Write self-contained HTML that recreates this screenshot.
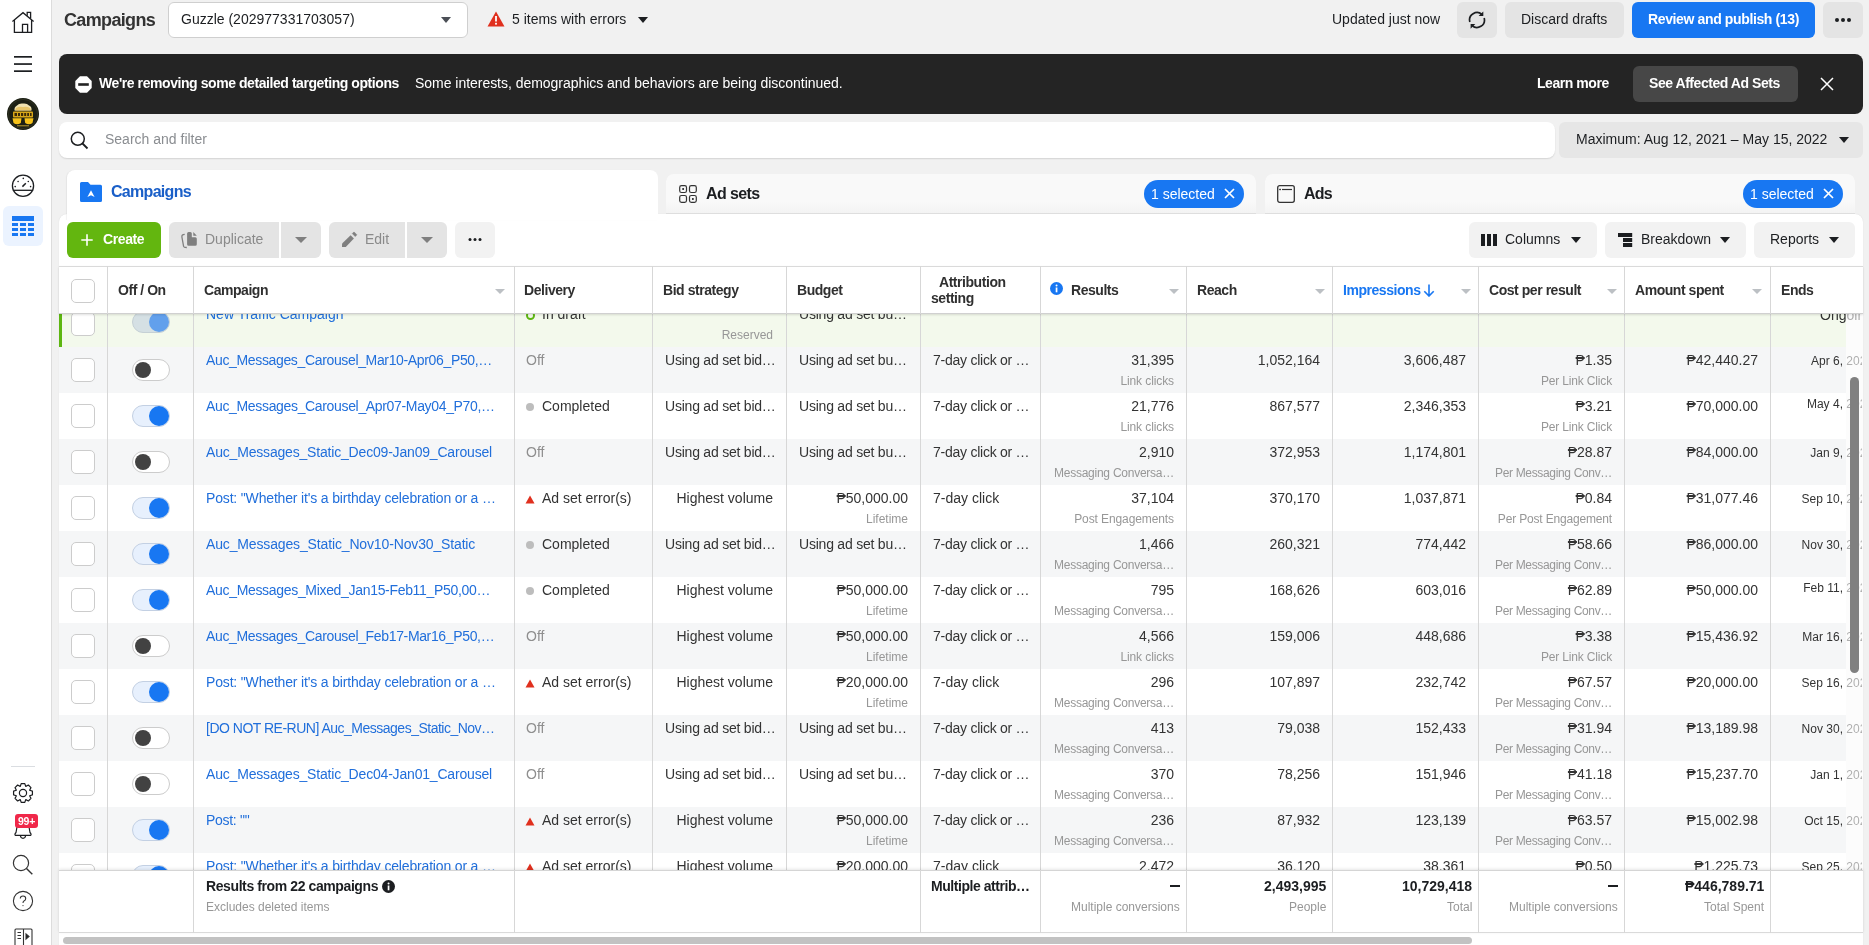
<!DOCTYPE html>
<html><head><meta charset="utf-8"><title>Campaigns - Ads Manager</title>
<style>
*{box-sizing:border-box}
html,body{margin:0;padding:0}
body>*{will-change:transform}
body{width:1869px;height:945px;overflow:hidden;position:relative;background:#f1f1f1;font-family:"Liberation Sans",sans-serif;font-size:14px;color:#1c1e21}
.abs{position:absolute}
.t{position:absolute;white-space:nowrap;line-height:16px}
.b{font-weight:700;letter-spacing:-0.45px}
.btn{position:absolute;border-radius:6px;background:#e4e4e4}
.ell{overflow:hidden;text-overflow:ellipsis}
.vl{position:absolute;width:1px;background:#d7d7d7}
.cb{position:absolute;width:24px;height:24px;border:1px solid #cccccc;border-radius:5px;background:#fff}
.tg{position:absolute;width:38px;height:22px;border-radius:11px}
.tg.off{background:#fff;border:1px solid #cccccc}
.tg.on{background:#e7f0fd;border:1px solid #c3d0e3}
.knob{position:absolute;width:18px;height:18px;border-radius:50%;top:2px}
.r{text-align:right}
.sub{font-size:12px;color:#979797}
.arr{position:absolute;width:0;height:0;border-left:6px solid transparent;border-right:6px solid transparent;border-top:6px solid #1c1e21}
.sarr{position:absolute;width:0;height:0;border-left:6px solid transparent;border-right:6px solid transparent;border-top:6px solid #bcc0c4}
</style></head><body>

<div class="abs" style="left:0;top:0;width:52px;height:945px;background:#fff;border-right:1px solid #dcdcdc"></div>
<svg class="abs" style="left:12px;top:11px" width="23" height="23" viewBox="0 0 23 23" fill="none" stroke="#1c1e21" stroke-width="1.3">
<path d="M0.4 10.6 L11 1.7 L21.6 10.6"/><path d="M2.4 9 V21.4 H19.6 V9"/><path d="M15.2 4.8 V1.3 H18.6 V7.6"/><path d="M10.5 21.4 V13.3 H15.6 V21.4"/></svg>
<svg class="abs" style="left:14px;top:55px" width="19" height="18" viewBox="0 0 19 18"><rect x="0" y="1" width="18" height="1.7" fill="#1c1e21"/><rect x="0" y="8.2" width="18" height="1.7" fill="#1c1e21"/><rect x="0" y="15.3" width="18" height="1.7" fill="#1c1e21"/></svg>
<svg class="abs" style="left:7px;top:98px" width="32" height="32" viewBox="0 0 32 32">
<circle cx="16" cy="16" r="16" fill="#1b1f14"/>
<circle cx="16" cy="16" r="14.6" fill="none" stroke="#3a3a2a" stroke-width="0.6"/>
<path d="M7.5 12.5 Q7 9 10 7.5 Q12 5 16 5.5 Q20 5 22 7.5 Q25 8.5 24.5 12.5 Z" fill="#f0e2b0"/>
<path d="M9 10 Q12 8 16 9 Q20 8 23 10 L24 12.5 H8 Z" fill="#e8c66a"/>
<rect x="6" y="13.5" width="20" height="6" rx="0.8" fill="#d9a718"/>
<path d="M7.5 15 h2.5 v3 h-2.5 z M11 15 h2 v3 h-2 z M14 15 h2.2 v3 h-2.2 z M17.2 15 h2 v3 h-2 z M20.2 15 h1.8 v3 h-1.8 z M23 15 h1.6 v3 h-1.6 z" fill="#3a2a08"/>
<path d="M5.5 20.3 H14.5 L13.8 25 Q10 27.5 6.5 25 Z" fill="#f6c21a"/>
<path d="M17.5 20.3 H26.5 L25.5 25 Q22 27.5 18.2 25 Z" fill="#f6c21a"/>
<rect x="10" y="27.3" width="12" height="1" fill="#b89a30"/>
</svg>
<svg class="abs" style="left:11px;top:174px" width="24" height="24" viewBox="0 0 24 24" fill="none" stroke="#1c1e21" stroke-width="1.3">
<circle cx="12" cy="11.8" r="10.6"/><path d="M1.8 16.3 H22.2"/><path d="M11.4 12.6 L14.8 9.2" stroke-width="1.5"/>
<g fill="#1c1e21" stroke="none"><circle cx="4.2" cy="12.6" r="0.8"/><circle cx="7.1" cy="7.5" r="0.8"/><circle cx="12.3" cy="4.4" r="0.8"/><circle cx="17.3" cy="7.5" r="0.8"/><circle cx="19.6" cy="12.6" r="0.8"/></g>
</svg>
<div class="abs" style="left:3px;top:206px;width:40px;height:40px;border-radius:6px;background:#ebf3ff"></div>
<svg class="abs" style="left:12px;top:216px" width="22" height="21" viewBox="0 0 22 21" fill="#1877f2">
<rect x="0" y="0" width="22" height="5"/>
<rect x="0" y="7" width="6" height="3"/><rect x="8" y="7" width="6" height="3"/><rect x="16" y="7" width="6" height="3"/>
<rect x="0" y="12" width="6" height="3"/><rect x="8" y="12" width="6" height="3"/><rect x="16" y="12" width="6" height="3"/>
<rect x="0" y="17" width="6" height="3"/><rect x="8" y="17" width="6" height="3"/><rect x="16" y="17" width="6" height="3"/>
</svg>
<div class="abs" style="left:11px;top:766px;width:24px;height:1px;background:#dadde1"></div>
<svg class="abs" style="left:12px;top:782px" width="22" height="22" viewBox="0 0 22 22" fill="none" stroke="#1c1e21" stroke-width="1.2" stroke-linejoin="round">
<path d="M13.70 4.32 L12.83 1.58 L9.17 1.58 L8.30 4.32 L8.19 4.37 L5.63 3.04 L3.04 5.63 L4.37 8.19 L4.32 8.30 L1.58 9.17 L1.58 12.83 L4.32 13.70 L4.37 13.81 L3.04 16.37 L5.63 18.96 L8.19 17.63 L8.30 17.68 L9.17 20.42 L12.83 20.42 L13.70 17.68 L13.81 17.63 L16.37 18.96 L18.96 16.37 L17.63 13.81 L17.68 13.70 L20.42 12.83 L20.42 9.17 L17.68 8.30 L17.63 8.19 L18.96 5.63 L16.37 3.04 L13.81 4.37 Z"/>
<circle cx="11" cy="11" r="3.6"/></svg>
<svg class="abs" style="left:13px;top:818px" width="20" height="22" viewBox="0 0 20 22" fill="none" stroke="#1c1e21" stroke-width="1.2" stroke-linejoin="round">
<path d="M4.5 6 L3 14.5 Q1.3 16.5 2.3 17.3 H17.7 Q18.7 16.5 17 14.5 L15.5 6"/><path d="M7.3 17.5 Q7.8 20.3 10 20.3 Q12.2 20.3 12.7 17.5"/></svg>
<div class="abs" style="left:15px;top:814px;width:23px;height:14px;border-radius:3px;background:#f0284a;color:#fff;font-size:10.5px;font-weight:700;line-height:14px;text-align:center;letter-spacing:-0.2px">99+</div>
<svg class="abs" style="left:12px;top:854px" width="22" height="22" viewBox="0 0 22 22" fill="none" stroke="#333" stroke-width="1.2">
<circle cx="9" cy="9" r="7.6"/><path d="M14.5 14.5 L20.3 20.3" stroke-width="1.4"/></svg>
<svg class="abs" style="left:12px;top:890px" width="22" height="22" viewBox="0 0 22 22" fill="none" stroke="#333" stroke-width="1.1">
<circle cx="11" cy="11" r="9.6"/><path d="M8.3 8.6 Q8.3 6 11 6 Q13.7 6 13.7 8.4 Q13.7 10 12 10.9 Q11 11.5 11 13"/><circle cx="11" cy="15.6" r="0.6" fill="#333" stroke="none"/></svg>
<svg class="abs" style="left:14px;top:928px" width="19" height="18" viewBox="0 0 19 18" fill="none" stroke="#333" stroke-width="1.1">
<path d="M9.5 1 V18 M2 1 H17 Q18 1 18 2 V18 M1 18 V2 Q1 1 2 1"/><path d="M3.5 4.5 H7 M3.5 7.5 H7 M3.5 10.5 H7"/><path d="M12 6 L15 8.5 L12 11 Z" fill="#1c1e21"/></svg>
<div class="t b" style="left:64px;top:10px;font-size:18px;line-height:20px;letter-spacing:-0.65px;color:#333">Campaigns</div>
<div class="abs" style="left:168px;top:2px;width:300px;height:36px;background:#fff;border:1px solid #cfcfcf;border-radius:6px"></div>
<div class="t" style="left:181px;top:11px;color:#1c1e21">Guzzle (202977331703057)</div>
<div class="arr" style="left:441px;top:17px;border-top-color:#4b4f56;border-left-width:5.5px;border-right-width:5.5px"></div>
<svg class="abs" style="left:487px;top:11px" width="18" height="16" viewBox="0 0 18 16"><path d="M9 0.5 L17.5 15.5 H0.5 Z" fill="#e0301e"/><rect x="8.1" y="5" width="1.8" height="5.5" fill="#fff"/><rect x="8.1" y="11.8" width="1.8" height="1.8" fill="#fff"/></svg>
<div class="t" style="left:512px;top:11px;color:#1c1e21">5 items with errors</div>
<div class="arr" style="left:638px;top:17px;border-left-width:5.5px;border-right-width:5.5px"></div>
<div class="t" style="left:1332px;top:11px;color:#1c1e21">Updated just now</div>
<div class="btn" style="left:1457px;top:2px;width:40px;height:36px"></div>
<svg class="abs" style="left:1467px;top:10px" width="20" height="20" viewBox="0 0 20 20" fill="none" stroke="#1c1e21" stroke-width="1.7">
<path d="M2.85 11.92 A7.4 7.4 0 0 1 14.95 4.50"/><path d="M17.15 8.08 A7.4 7.4 0 0 1 5.05 15.50"/>
<path d="M11.6 6.1 H16.3 V1.4 Z" fill="#1c1e21" stroke="none"/><path d="M3.6 14 H8.3 L3.6 18.7 Z" fill="#1c1e21" stroke="none"/></svg>
<div class="btn" style="left:1505px;top:2px;width:119px;height:36px"></div>
<div class="t" style="left:1521px;top:11px;color:#1c1e21">Discard drafts</div>
<div class="btn" style="left:1632px;top:2px;width:183px;height:36px;background:#1877f2"></div>
<div class="t b" style="left:1648px;top:11px;color:#fff;letter-spacing:-0.37px">Review and publish (13)</div>
<div class="btn" style="left:1823px;top:2px;width:40px;height:36px"></div>
<svg class="abs" style="left:1833px;top:17px" width="20" height="6" viewBox="0 0 20 6" fill="#1c1e21"><circle cx="4" cy="3" r="2"/><circle cx="10" cy="3" r="2"/><circle cx="16" cy="3" r="2"/></svg>
<div class="abs" style="left:59px;top:54px;width:1804px;height:60px;background:#242424;border-radius:8px"></div>
<svg class="abs" style="left:75px;top:75.5px" width="17" height="17" viewBox="0 0 17 17"><path d="M5 0.3 H12 L16.7 5 V12 L12 16.7 H5 L0.3 12 V5 Z" fill="#fff"/><rect x="3.2" y="7.2" width="10.6" height="2.6" fill="#242424"/></svg>
<div class="t b" style="left:99px;top:75px;color:#fff;letter-spacing:-0.43px">We're removing some detailed targeting options</div>
<div class="t" style="left:415px;top:75px;color:#fff;letter-spacing:-0.03px">Some interests, demographics and behaviors are being discontinued.</div>
<div class="t b" style="left:1537px;top:75px;color:#fff">Learn more</div>
<div class="abs" style="left:1633px;top:66px;width:165px;height:36px;background:#474747;border-radius:6px"></div>
<div class="t b" style="left:1649px;top:75px;color:#fff">See Affected Ad Sets</div>
<svg class="abs" style="left:1820px;top:77px" width="14" height="14" viewBox="0 0 14 14" stroke="#fff" stroke-width="1.5"><path d="M1 1 L13 13 M13 1 L1 13"/></svg>
<div class="abs" style="left:59px;top:122px;width:1496px;height:36px;background:#fff;border-radius:8px;box-shadow:0 1px 1.5px rgba(0,0,0,0.12)"></div>
<svg class="abs" style="left:70px;top:131px" width="19" height="19" viewBox="0 0 19 19" fill="none" stroke="#1c1e21" stroke-width="1.5"><circle cx="7.8" cy="7.8" r="6.5"/><path d="M12.5 12.5 L17.5 17.5" stroke-width="1.8"/></svg>
<div class="t" style="left:105px;top:131px;color:#8a8d91">Search and filter</div>
<div class="abs" style="left:1559px;top:122px;width:304px;height:36px;background:#e6e6e6;border-radius:6px"></div>
<div class="t" style="left:1576px;top:131px;color:#1c1e21">Maximum: Aug 12, 2021 – May 15, 2022</div>
<div class="arr" style="left:1839px;top:137px;border-left-width:5.5px;border-right-width:5.5px"></div>
<div class="abs" style="left:666px;top:174px;width:590px;height:40px;background:linear-gradient(#f9f9f9 70%,#f3f3f3);border-radius:8px 8px 0 0;box-shadow:inset 0 -1px 0 rgba(0,0,0,0.07)"></div>
<div class="abs" style="left:1265px;top:174px;width:590px;height:40px;background:linear-gradient(#f9f9f9 70%,#f3f3f3);border-radius:8px 8px 0 0;box-shadow:inset 0 -1px 0 rgba(0,0,0,0.07)"></div>
<div class="abs" style="left:59px;top:214px;width:1804px;height:731px;background:#fff;border-radius:8px 8px 0 0;box-shadow:0 0 1px rgba(0,0,0,0.15)"></div>
<div class="abs" style="left:67px;top:170px;width:591px;height:50px;background:#fff;border-radius:8px 8px 0 0;box-shadow:-1px 0 1px rgba(0,0,0,0.05)"></div>
<svg class="abs" style="left:80px;top:182px" width="22" height="20" viewBox="0 0 22 20"><path d="M0 1.5 Q0 0 1.5 0 H8 L10.5 2.8 H20.5 Q22 2.8 22 4.3 V18.5 Q22 20 20.5 20 H1.5 Q0 20 0 18.5 Z" fill="#1877f2"/><path d="M7.4 15.1 L11 8.3 L14.6 15.1 L11 13.2 Z" fill="#fff"/></svg>
<div class="t b" style="left:111px;top:183px;font-size:16px;line-height:18px;color:#1a5fc8;letter-spacing:-0.7px">Campaigns</div>
<svg class="abs" style="left:679px;top:185px" width="18" height="18" viewBox="0 0 18 18" fill="none" stroke="#333" stroke-width="1.2">
<rect x="0.7" y="0.7" width="6.8" height="6.8" rx="1.8"/><rect x="10.5" y="0.7" width="6.8" height="6.8" rx="1.8"/><rect x="0.7" y="10.5" width="6.8" height="6.8" rx="1.8"/><rect x="10.5" y="10.5" width="6.8" height="6.8" rx="1.8"/>
<circle cx="4.1" cy="4.1" r="1" fill="#1c1e21" stroke="none"/><circle cx="13.9" cy="13.9" r="1" fill="#1c1e21" stroke="none"/></svg>
<div class="t b" style="left:706px;top:185px;font-size:16px;line-height:18px;color:#1c1e21;letter-spacing:-0.6px">Ad sets</div>
<div class="abs" style="left:1144px;top:180px;width:100px;height:28px;border-radius:14px;background:#1877f2"></div>
<div class="t" style="left:1151px;top:186px;color:#fff;font-size:14px">1 selected</div>
<svg class="abs" style="left:1224px;top:188px" width="11" height="11" viewBox="0 0 11 11" stroke="#fff" stroke-width="1.7"><path d="M1 1 L10 10 M10 1 L1 10"/></svg>
<svg class="abs" style="left:1277px;top:185px" width="18" height="18" viewBox="0 0 18 18" fill="none" stroke="#333" stroke-width="1.3">
<rect x="0.7" y="0.7" width="16.6" height="16.6" rx="2"/><path d="M5 4.5 H15" stroke-width="1.2"/><path d="M2.3 4.5 H3.9 M3.1 3.7 V5.3" stroke-width="1"/></svg>
<div class="t b" style="left:1304px;top:185px;font-size:16px;line-height:18px;color:#1c1e21;letter-spacing:-0.8px">Ads</div>
<div class="abs" style="left:1743px;top:180px;width:100px;height:28px;border-radius:14px;background:#1877f2"></div>
<div class="t" style="left:1750px;top:186px;color:#fff;font-size:14px">1 selected</div>
<svg class="abs" style="left:1823px;top:188px" width="11" height="11" viewBox="0 0 11 11" stroke="#fff" stroke-width="1.7"><path d="M1 1 L10 10 M10 1 L1 10"/></svg>
<div class="btn" style="left:67px;top:222px;width:94px;height:36px;background:#63b60f"></div>
<svg class="abs" style="left:81px;top:234px" width="12" height="12" viewBox="0 0 12 12" stroke="#fff" stroke-width="1.6"><path d="M6 0.3 V11.7 M0.3 6 H11.7"/></svg>
<div class="t b" style="left:103px;top:231px;color:#fff;letter-spacing:-0.4px">Create</div>
<div class="btn" style="left:169px;top:222px;width:110px;height:36px;border-radius:6px 0 0 6px"></div>
<div class="btn" style="left:281px;top:222px;width:40px;height:36px;border-radius:0 6px 6px 0"></div>
<svg class="abs" style="left:180px;top:230px" width="18" height="19" viewBox="0 0 18 19"><path d="M7.1 3.5 Q7.1 2 8.6 2 H10.3 Q11.8 2 11.8 3.5 V7.2 H15.3 Q16.8 7.2 16.8 8.7 V14.3 Q16.8 15.8 15.3 15.8 H8.6 Q7.1 15.8 7.1 14.3 Z M13.3 2 L16.8 5.7 H13.3 Z" fill="#7f7f7f"/><path d="M4.7 4.3 Q1.6 4.5 1.9 7 L3.6 16.4 Q3.9 17.6 6.8 17.5" fill="none" stroke="#7f7f7f" stroke-width="1.3"/></svg>
<div class="t" style="left:205px;top:231px;color:#8a8a8a">Duplicate</div>
<div class="arr" style="left:295px;top:237px;border-top-color:#7f7f7f"></div>
<div class="btn" style="left:329px;top:222px;width:76px;height:36px;border-radius:6px 0 0 6px"></div>
<div class="btn" style="left:407px;top:222px;width:40px;height:36px;border-radius:0 6px 6px 0"></div>
<svg class="abs" style="left:340px;top:230px" width="18" height="18" viewBox="0 0 18 18"><path d="M2 16.9 H5.8 L13.9 8.5 L10.6 5.2 L2.1 13.4 Z" fill="#7f7f7f"/><path d="M12.3 3.6 L13.7 2.2 Q14 1.9 14.3 2.2 L16.6 4.5 Q16.9 4.8 16.6 5.1 L15.2 6.5 Z" fill="#7f7f7f" stroke="#7f7f7f" stroke-width="0.6" stroke-linejoin="round"/></svg>
<div class="t" style="left:365px;top:231px;color:#8a8a8a">Edit</div>
<div class="arr" style="left:421px;top:237px;border-top-color:#7f7f7f"></div>
<div class="btn" style="left:455px;top:222px;width:40px;height:36px;background:#f2f2f2"></div>
<svg class="abs" style="left:467px;top:237px" width="16" height="5" viewBox="0 0 16 5" fill="#1c1e21"><circle cx="3" cy="2.5" r="1.5"/><circle cx="8" cy="2.5" r="1.5"/><circle cx="13" cy="2.5" r="1.5"/></svg>
<div class="btn" style="left:1469px;top:222px;width:128px;height:36px;background:#f2f2f2"></div>
<svg class="abs" style="left:1481px;top:234px" width="16" height="12" viewBox="0 0 16 12" fill="#1c1e21"><rect x="0" y="0" width="4" height="12"/><rect x="6" y="0" width="4" height="12"/><rect x="12" y="0" width="4" height="12"/></svg>
<div class="t" style="left:1505px;top:231px;color:#1c1e21">Columns</div>
<div class="arr" style="left:1571px;top:237px;border-left-width:5.5px;border-right-width:5.5px"></div>
<div class="btn" style="left:1605px;top:222px;width:141px;height:36px;background:#f2f2f2"></div>
<svg class="abs" style="left:1618px;top:233px" width="15" height="15" viewBox="0 0 15 15" fill="#1c1e21"><rect x="0" y="0" width="14.2" height="4"/><rect x="5" y="5" width="9.2" height="4"/><rect x="5" y="10" width="9.2" height="4"/></svg>
<div class="t" style="left:1641px;top:231px;color:#1c1e21">Breakdown</div>
<div class="arr" style="left:1720px;top:237px;border-left-width:5.5px;border-right-width:5.5px"></div>
<div class="btn" style="left:1754px;top:222px;width:101px;height:36px;background:#f2f2f2"></div>
<div class="t" style="left:1770px;top:231px;color:#1c1e21">Reports</div>
<div class="arr" style="left:1829px;top:237px;border-left-width:5.5px;border-right-width:5.5px"></div>
<div class="abs" style="left:59px;top:314px;width:1803px;height:556px;overflow:hidden">
<div class="abs" style="left:0;top:-13px;width:1787px;height:46px;background:#f3f9ec">
<div class="abs" style="left:0;top:0;width:2.5px;height:46px;background:#5db611"></div>
<div class="cb" style="left:12px;top:11px"></div>
<div class="tg on" style="left:73px;top:10px;background:#d5e0e4;border-color:#c5d0d5"><div class="knob" style="left:16px;top:0;width:20px;height:20px;background:#62a0ec"></div></div>
<div class="t" style="left:147px;top:5px;color:#216fdb;letter-spacing:0px">New Traffic Campaign</div>
<div class="abs" style="left:467px;top:10px;width:9px;height:9px;border-radius:50%;border:2.5px solid #5db611"></div>
<div class="t" style="left:483px;top:5px;color:#333333">In draft</div>
<div class="t r sub" style="right:1073px;top:26px">Reserved</div>
<div class="t" style="left:740px;top:5px;color:#333333;letter-spacing:-0.22px">Using ad set bu…</div>
<div class="abs" style="left:1712px;top:0;width:91px;height:46px;overflow:hidden"><div class="t r" style="right:-11px;top:6px;font-size:14px;color:#333333">Ongoing</div></div>
</div>
<div class="abs" style="left:0;top:33px;width:1787px;height:46px;background:#f5f6f7">
<div class="cb" style="left:12px;top:11px"></div>
<div class="tg off" style="left:73px;top:12px"><div class="knob" style="left:2px;top:2px;width:16px;height:16px;background:#424242"></div></div>
<div class="t" style="left:147px;top:5px;color:#216fdb;letter-spacing:-0.35px">Auc_Messages_Carousel_Mar10-Apr06_P50,…</div>
<div class="t" style="left:467px;top:5px;color:#8f8f8f">Off</div>
<div class="t" style="left:606px;top:5px;color:#333333;letter-spacing:-0.22px">Using ad set bid…</div>
<div class="t" style="left:740px;top:5px;color:#333333;letter-spacing:-0.22px">Using ad set bu…</div>
<div class="t" style="left:874px;top:5px;color:#333333;letter-spacing:-0.25px">7-day click or …</div>
<div class="t r" style="right:672px;top:5px;color:#333333">31,395</div>
<div class="t r sub" style="right:672px;top:26px;letter-spacing:-0.1px">Link clicks</div>
<div class="t r" style="right:526px;top:5px;color:#333333">1,052,164</div>
<div class="t r" style="right:380px;top:5px;color:#333333">3,606,487</div>
<div class="t r" style="right:234px;top:5px;color:#333333">₱1.35</div>
<div class="t r sub" style="right:234px;top:26px;letter-spacing:-0.17px">Per Link Click</div>
<div class="t r" style="right:88px;top:5px;color:#333333">₱42,440.27</div>
<div class="abs" style="left:1712px;top:0;width:91px;height:46px;overflow:hidden"><div class="t r" style="right:-11px;top:6px;font-size:12px;color:#333333">Apr 6, 2022</div></div>
</div>
<div class="abs" style="left:0;top:79px;width:1787px;height:46px;background:#fff">
<div class="cb" style="left:12px;top:11px"></div>
<div class="tg on" style="left:73px;top:12px"><div class="knob" style="left:16px;top:0;width:20px;height:20px;background:#1877f2"></div></div>
<div class="t" style="left:147px;top:5px;color:#216fdb;letter-spacing:-0.34px">Auc_Messages_Carousel_Apr07-May04_P70,…</div>
<div class="abs" style="left:467px;top:10px;width:8px;height:8px;border-radius:50%;background:#bdbdbd"></div>
<div class="t" style="left:483px;top:5px;color:#333333">Completed</div>
<div class="t" style="left:606px;top:5px;color:#333333;letter-spacing:-0.22px">Using ad set bid…</div>
<div class="t" style="left:740px;top:5px;color:#333333;letter-spacing:-0.22px">Using ad set bu…</div>
<div class="t" style="left:874px;top:5px;color:#333333;letter-spacing:-0.25px">7-day click or …</div>
<div class="t r" style="right:672px;top:5px;color:#333333">21,776</div>
<div class="t r sub" style="right:672px;top:26px;letter-spacing:-0.1px">Link clicks</div>
<div class="t r" style="right:526px;top:5px;color:#333333">867,577</div>
<div class="t r" style="right:380px;top:5px;color:#333333">2,346,353</div>
<div class="t r" style="right:234px;top:5px;color:#333333">₱3.21</div>
<div class="t r sub" style="right:234px;top:26px;letter-spacing:-0.17px">Per Link Click</div>
<div class="t r" style="right:88px;top:5px;color:#333333">₱70,000.00</div>
<div class="abs" style="left:1712px;top:0;width:91px;height:46px;overflow:hidden"><div class="t r" style="right:-11px;top:3px;font-size:12px;color:#333333">May 4, 2022</div></div>
</div>
<div class="abs" style="left:0;top:125px;width:1787px;height:46px;background:#f5f6f7">
<div class="cb" style="left:12px;top:11px"></div>
<div class="tg off" style="left:73px;top:12px"><div class="knob" style="left:2px;top:2px;width:16px;height:16px;background:#424242"></div></div>
<div class="t" style="left:147px;top:5px;color:#216fdb;letter-spacing:-0.185px">Auc_Messages_Static_Dec09-Jan09_Carousel</div>
<div class="t" style="left:467px;top:5px;color:#8f8f8f">Off</div>
<div class="t" style="left:606px;top:5px;color:#333333;letter-spacing:-0.22px">Using ad set bid…</div>
<div class="t" style="left:740px;top:5px;color:#333333;letter-spacing:-0.22px">Using ad set bu…</div>
<div class="t" style="left:874px;top:5px;color:#333333;letter-spacing:-0.25px">7-day click or …</div>
<div class="t r" style="right:672px;top:5px;color:#333333">2,910</div>
<div class="t r sub" style="right:672px;top:26px;letter-spacing:-0.25px">Messaging Conversa…</div>
<div class="t r" style="right:526px;top:5px;color:#333333">372,953</div>
<div class="t r" style="right:380px;top:5px;color:#333333">1,174,801</div>
<div class="t r" style="right:234px;top:5px;color:#333333">₱28.87</div>
<div class="t r sub" style="right:234px;top:26px;letter-spacing:-0.34px">Per Messaging Conv…</div>
<div class="t r" style="right:88px;top:5px;color:#333333">₱84,000.00</div>
<div class="abs" style="left:1712px;top:0;width:91px;height:46px;overflow:hidden"><div class="t r" style="right:-11px;top:6px;font-size:12px;color:#333333">Jan 9, 2022</div></div>
</div>
<div class="abs" style="left:0;top:171px;width:1787px;height:46px;background:#fff">
<div class="cb" style="left:12px;top:11px"></div>
<div class="tg on" style="left:73px;top:12px"><div class="knob" style="left:16px;top:0;width:20px;height:20px;background:#1877f2"></div></div>
<div class="t" style="left:147px;top:5px;color:#216fdb;letter-spacing:-0.165px">Post: "Whether it's a birthday celebration or a …</div>
<svg class="abs" style="left:466px;top:10px" width="10" height="9" viewBox="0 0 10 9"><path d="M5 0.5 L9.5 8.5 H0.5 Z" fill="#e0301e"/></svg>
<div class="t" style="left:483px;top:5px;color:#333333">Ad set error(s)</div>
<div class="t r" style="right:1073px;top:5px;color:#333333">Highest volume</div>
<div class="t r" style="right:938px;top:5px;color:#333333">₱50,000.00</div>
<div class="t r sub" style="right:938px;top:26px">Lifetime</div>
<div class="t" style="left:874px;top:5px;color:#333333;letter-spacing:0px">7-day click</div>
<div class="t r" style="right:672px;top:5px;color:#333333">37,104</div>
<div class="t r sub" style="right:672px;top:26px;letter-spacing:-0.1px">Post Engagements</div>
<div class="t r" style="right:526px;top:5px;color:#333333">370,170</div>
<div class="t r" style="right:380px;top:5px;color:#333333">1,037,871</div>
<div class="t r" style="right:234px;top:5px;color:#333333">₱0.84</div>
<div class="t r sub" style="right:234px;top:26px;letter-spacing:-0.17px">Per Post Engagement</div>
<div class="t r" style="right:88px;top:5px;color:#333333">₱31,077.46</div>
<div class="abs" style="left:1712px;top:0;width:91px;height:46px;overflow:hidden"><div class="t r" style="right:-11px;top:6px;font-size:12px;color:#333333">Sep 10, 2021</div></div>
</div>
<div class="abs" style="left:0;top:217px;width:1787px;height:46px;background:#f5f6f7">
<div class="cb" style="left:12px;top:11px"></div>
<div class="tg on" style="left:73px;top:12px"><div class="knob" style="left:16px;top:0;width:20px;height:20px;background:#1877f2"></div></div>
<div class="t" style="left:147px;top:5px;color:#216fdb;letter-spacing:-0.145px">Auc_Messages_Static_Nov10-Nov30_Static</div>
<div class="abs" style="left:467px;top:10px;width:8px;height:8px;border-radius:50%;background:#bdbdbd"></div>
<div class="t" style="left:483px;top:5px;color:#333333">Completed</div>
<div class="t" style="left:606px;top:5px;color:#333333;letter-spacing:-0.22px">Using ad set bid…</div>
<div class="t" style="left:740px;top:5px;color:#333333;letter-spacing:-0.22px">Using ad set bu…</div>
<div class="t" style="left:874px;top:5px;color:#333333;letter-spacing:-0.25px">7-day click or …</div>
<div class="t r" style="right:672px;top:5px;color:#333333">1,466</div>
<div class="t r sub" style="right:672px;top:26px;letter-spacing:-0.25px">Messaging Conversa…</div>
<div class="t r" style="right:526px;top:5px;color:#333333">260,321</div>
<div class="t r" style="right:380px;top:5px;color:#333333">774,442</div>
<div class="t r" style="right:234px;top:5px;color:#333333">₱58.66</div>
<div class="t r sub" style="right:234px;top:26px;letter-spacing:-0.34px">Per Messaging Conv…</div>
<div class="t r" style="right:88px;top:5px;color:#333333">₱86,000.00</div>
<div class="abs" style="left:1712px;top:0;width:91px;height:46px;overflow:hidden"><div class="t r" style="right:-11px;top:6px;font-size:12px;color:#333333">Nov 30, 2021</div></div>
</div>
<div class="abs" style="left:0;top:263px;width:1787px;height:46px;background:#fff">
<div class="cb" style="left:12px;top:11px"></div>
<div class="tg on" style="left:73px;top:12px"><div class="knob" style="left:16px;top:0;width:20px;height:20px;background:#1877f2"></div></div>
<div class="t" style="left:147px;top:5px;color:#216fdb;letter-spacing:-0.32px">Auc_Messages_Mixed_Jan15-Feb11_P50,00…</div>
<div class="abs" style="left:467px;top:10px;width:8px;height:8px;border-radius:50%;background:#bdbdbd"></div>
<div class="t" style="left:483px;top:5px;color:#333333">Completed</div>
<div class="t r" style="right:1073px;top:5px;color:#333333">Highest volume</div>
<div class="t r" style="right:938px;top:5px;color:#333333">₱50,000.00</div>
<div class="t r sub" style="right:938px;top:26px">Lifetime</div>
<div class="t" style="left:874px;top:5px;color:#333333;letter-spacing:-0.25px">7-day click or …</div>
<div class="t r" style="right:672px;top:5px;color:#333333">795</div>
<div class="t r sub" style="right:672px;top:26px;letter-spacing:-0.25px">Messaging Conversa…</div>
<div class="t r" style="right:526px;top:5px;color:#333333">168,626</div>
<div class="t r" style="right:380px;top:5px;color:#333333">603,016</div>
<div class="t r" style="right:234px;top:5px;color:#333333">₱62.89</div>
<div class="t r sub" style="right:234px;top:26px;letter-spacing:-0.34px">Per Messaging Conv…</div>
<div class="t r" style="right:88px;top:5px;color:#333333">₱50,000.00</div>
<div class="abs" style="left:1712px;top:0;width:91px;height:46px;overflow:hidden"><div class="t r" style="right:-11px;top:3px;font-size:12px;color:#333333">Feb 11, 2022</div></div>
</div>
<div class="abs" style="left:0;top:309px;width:1787px;height:46px;background:#f5f6f7">
<div class="cb" style="left:12px;top:11px"></div>
<div class="tg off" style="left:73px;top:12px"><div class="knob" style="left:2px;top:2px;width:16px;height:16px;background:#424242"></div></div>
<div class="t" style="left:147px;top:5px;color:#216fdb;letter-spacing:-0.35px">Auc_Messages_Carousel_Feb17-Mar16_P50,…</div>
<div class="t" style="left:467px;top:5px;color:#8f8f8f">Off</div>
<div class="t r" style="right:1073px;top:5px;color:#333333">Highest volume</div>
<div class="t r" style="right:938px;top:5px;color:#333333">₱50,000.00</div>
<div class="t r sub" style="right:938px;top:26px">Lifetime</div>
<div class="t" style="left:874px;top:5px;color:#333333;letter-spacing:-0.25px">7-day click or …</div>
<div class="t r" style="right:672px;top:5px;color:#333333">4,566</div>
<div class="t r sub" style="right:672px;top:26px;letter-spacing:-0.1px">Link clicks</div>
<div class="t r" style="right:526px;top:5px;color:#333333">159,006</div>
<div class="t r" style="right:380px;top:5px;color:#333333">448,686</div>
<div class="t r" style="right:234px;top:5px;color:#333333">₱3.38</div>
<div class="t r sub" style="right:234px;top:26px;letter-spacing:-0.17px">Per Link Click</div>
<div class="t r" style="right:88px;top:5px;color:#333333">₱15,436.92</div>
<div class="abs" style="left:1712px;top:0;width:91px;height:46px;overflow:hidden"><div class="t r" style="right:-11px;top:6px;font-size:12px;color:#333333">Mar 16, 2022</div></div>
</div>
<div class="abs" style="left:0;top:355px;width:1787px;height:46px;background:#fff">
<div class="cb" style="left:12px;top:11px"></div>
<div class="tg on" style="left:73px;top:12px"><div class="knob" style="left:16px;top:0;width:20px;height:20px;background:#1877f2"></div></div>
<div class="t" style="left:147px;top:5px;color:#216fdb;letter-spacing:-0.165px">Post: "Whether it's a birthday celebration or a …</div>
<svg class="abs" style="left:466px;top:10px" width="10" height="9" viewBox="0 0 10 9"><path d="M5 0.5 L9.5 8.5 H0.5 Z" fill="#e0301e"/></svg>
<div class="t" style="left:483px;top:5px;color:#333333">Ad set error(s)</div>
<div class="t r" style="right:1073px;top:5px;color:#333333">Highest volume</div>
<div class="t r" style="right:938px;top:5px;color:#333333">₱20,000.00</div>
<div class="t r sub" style="right:938px;top:26px">Lifetime</div>
<div class="t" style="left:874px;top:5px;color:#333333;letter-spacing:0px">7-day click</div>
<div class="t r" style="right:672px;top:5px;color:#333333">296</div>
<div class="t r sub" style="right:672px;top:26px;letter-spacing:-0.25px">Messaging Conversa…</div>
<div class="t r" style="right:526px;top:5px;color:#333333">107,897</div>
<div class="t r" style="right:380px;top:5px;color:#333333">232,742</div>
<div class="t r" style="right:234px;top:5px;color:#333333">₱67.57</div>
<div class="t r sub" style="right:234px;top:26px;letter-spacing:-0.34px">Per Messaging Conv…</div>
<div class="t r" style="right:88px;top:5px;color:#333333">₱20,000.00</div>
<div class="abs" style="left:1712px;top:0;width:91px;height:46px;overflow:hidden"><div class="t r" style="right:-11px;top:6px;font-size:12px;color:#333333">Sep 16, 2021</div></div>
</div>
<div class="abs" style="left:0;top:401px;width:1787px;height:46px;background:#f5f6f7">
<div class="cb" style="left:12px;top:11px"></div>
<div class="tg off" style="left:73px;top:12px"><div class="knob" style="left:2px;top:2px;width:16px;height:16px;background:#424242"></div></div>
<div class="t" style="left:147px;top:5px;color:#216fdb;letter-spacing:-0.5px">[DO NOT RE-RUN] Auc_Messages_Static_Nov…</div>
<div class="t" style="left:467px;top:5px;color:#8f8f8f">Off</div>
<div class="t" style="left:606px;top:5px;color:#333333;letter-spacing:-0.22px">Using ad set bid…</div>
<div class="t" style="left:740px;top:5px;color:#333333;letter-spacing:-0.22px">Using ad set bu…</div>
<div class="t" style="left:874px;top:5px;color:#333333;letter-spacing:-0.25px">7-day click or …</div>
<div class="t r" style="right:672px;top:5px;color:#333333">413</div>
<div class="t r sub" style="right:672px;top:26px;letter-spacing:-0.25px">Messaging Conversa…</div>
<div class="t r" style="right:526px;top:5px;color:#333333">79,038</div>
<div class="t r" style="right:380px;top:5px;color:#333333">152,433</div>
<div class="t r" style="right:234px;top:5px;color:#333333">₱31.94</div>
<div class="t r sub" style="right:234px;top:26px;letter-spacing:-0.34px">Per Messaging Conv…</div>
<div class="t r" style="right:88px;top:5px;color:#333333">₱13,189.98</div>
<div class="abs" style="left:1712px;top:0;width:91px;height:46px;overflow:hidden"><div class="t r" style="right:-11px;top:6px;font-size:12px;color:#333333">Nov 30, 2021</div></div>
</div>
<div class="abs" style="left:0;top:447px;width:1787px;height:46px;background:#fff">
<div class="cb" style="left:12px;top:11px"></div>
<div class="tg off" style="left:73px;top:12px"><div class="knob" style="left:2px;top:2px;width:16px;height:16px;background:#424242"></div></div>
<div class="t" style="left:147px;top:5px;color:#216fdb;letter-spacing:-0.185px">Auc_Messages_Static_Dec04-Jan01_Carousel</div>
<div class="t" style="left:467px;top:5px;color:#8f8f8f">Off</div>
<div class="t" style="left:606px;top:5px;color:#333333;letter-spacing:-0.22px">Using ad set bid…</div>
<div class="t" style="left:740px;top:5px;color:#333333;letter-spacing:-0.22px">Using ad set bu…</div>
<div class="t" style="left:874px;top:5px;color:#333333;letter-spacing:-0.25px">7-day click or …</div>
<div class="t r" style="right:672px;top:5px;color:#333333">370</div>
<div class="t r sub" style="right:672px;top:26px;letter-spacing:-0.25px">Messaging Conversa…</div>
<div class="t r" style="right:526px;top:5px;color:#333333">78,256</div>
<div class="t r" style="right:380px;top:5px;color:#333333">151,946</div>
<div class="t r" style="right:234px;top:5px;color:#333333">₱41.18</div>
<div class="t r sub" style="right:234px;top:26px;letter-spacing:-0.34px">Per Messaging Conv…</div>
<div class="t r" style="right:88px;top:5px;color:#333333">₱15,237.70</div>
<div class="abs" style="left:1712px;top:0;width:91px;height:46px;overflow:hidden"><div class="t r" style="right:-11px;top:6px;font-size:12px;color:#333333">Jan 1, 2022</div></div>
</div>
<div class="abs" style="left:0;top:493px;width:1787px;height:46px;background:#f5f6f7">
<div class="cb" style="left:12px;top:11px"></div>
<div class="tg on" style="left:73px;top:12px"><div class="knob" style="left:16px;top:0;width:20px;height:20px;background:#1877f2"></div></div>
<div class="t" style="left:147px;top:5px;color:#216fdb;letter-spacing:-0.3px">Post: ""</div>
<svg class="abs" style="left:466px;top:10px" width="10" height="9" viewBox="0 0 10 9"><path d="M5 0.5 L9.5 8.5 H0.5 Z" fill="#e0301e"/></svg>
<div class="t" style="left:483px;top:5px;color:#333333">Ad set error(s)</div>
<div class="t r" style="right:1073px;top:5px;color:#333333">Highest volume</div>
<div class="t r" style="right:938px;top:5px;color:#333333">₱50,000.00</div>
<div class="t r sub" style="right:938px;top:26px">Lifetime</div>
<div class="t" style="left:874px;top:5px;color:#333333;letter-spacing:-0.25px">7-day click or …</div>
<div class="t r" style="right:672px;top:5px;color:#333333">236</div>
<div class="t r sub" style="right:672px;top:26px;letter-spacing:-0.25px">Messaging Conversa…</div>
<div class="t r" style="right:526px;top:5px;color:#333333">87,932</div>
<div class="t r" style="right:380px;top:5px;color:#333333">123,139</div>
<div class="t r" style="right:234px;top:5px;color:#333333">₱63.57</div>
<div class="t r sub" style="right:234px;top:26px;letter-spacing:-0.34px">Per Messaging Conv…</div>
<div class="t r" style="right:88px;top:5px;color:#333333">₱15,002.98</div>
<div class="abs" style="left:1712px;top:0;width:91px;height:46px;overflow:hidden"><div class="t r" style="right:-11px;top:6px;font-size:12px;color:#333333">Oct 15, 2021</div></div>
</div>
<div class="abs" style="left:0;top:539px;width:1787px;height:46px;background:#fff">
<div class="cb" style="left:12px;top:11px"></div>
<div class="tg on" style="left:73px;top:12px"><div class="knob" style="left:16px;top:0;width:20px;height:20px;background:#1877f2"></div></div>
<div class="t" style="left:147px;top:5px;color:#216fdb;letter-spacing:-0.165px">Post: "Whether it's a birthday celebration or a …</div>
<svg class="abs" style="left:466px;top:10px" width="10" height="9" viewBox="0 0 10 9"><path d="M5 0.5 L9.5 8.5 H0.5 Z" fill="#e0301e"/></svg>
<div class="t" style="left:483px;top:5px;color:#333333">Ad set error(s)</div>
<div class="t r" style="right:1073px;top:5px;color:#333333">Highest volume</div>
<div class="t r" style="right:938px;top:5px;color:#333333">₱20,000.00</div>
<div class="t r sub" style="right:938px;top:26px">Lifetime</div>
<div class="t" style="left:874px;top:5px;color:#333333;letter-spacing:0px">7-day click</div>
<div class="t r" style="right:672px;top:5px;color:#333333">2,472</div>
<div class="t r sub" style="right:672px;top:26px;letter-spacing:-0.1px">Post Engagements</div>
<div class="t r" style="right:526px;top:5px;color:#333333">36,120</div>
<div class="t r" style="right:380px;top:5px;color:#333333">38,361</div>
<div class="t r" style="right:234px;top:5px;color:#333333">₱0.50</div>
<div class="t r sub" style="right:234px;top:26px;letter-spacing:-0.17px">Per Post Engagement</div>
<div class="t r" style="right:88px;top:5px;color:#333333">₱1,225.73</div>
<div class="abs" style="left:1712px;top:0;width:91px;height:46px;overflow:hidden"><div class="t r" style="right:-11px;top:6px;font-size:12px;color:#333333">Sep 25, 2021</div></div>
</div>
<div class="vl" style="left:48px;top:0;height:556px"></div>
<div class="vl" style="left:134px;top:0;height:556px"></div>
<div class="vl" style="left:455px;top:0;height:556px"></div>
<div class="vl" style="left:593px;top:0;height:556px"></div>
<div class="vl" style="left:727px;top:0;height:556px"></div>
<div class="vl" style="left:861px;top:0;height:556px"></div>
<div class="vl" style="left:981px;top:0;height:556px"></div>
<div class="vl" style="left:1127px;top:0;height:556px"></div>
<div class="vl" style="left:1273px;top:0;height:556px"></div>
<div class="vl" style="left:1419px;top:0;height:556px"></div>
<div class="vl" style="left:1565px;top:0;height:556px"></div>
<div class="vl" style="left:1711px;top:0;height:556px"></div>
</div>
<div class="abs" style="left:1846px;top:314px;width:17px;height:556px;background:rgba(250,250,250,0.62)"></div>
<div class="abs" style="left:1850px;top:377px;width:9px;height:296px;border-radius:4.5px;background:#808080"></div>
<div class="abs" style="left:59px;top:266px;width:1804px;height:48px;background:#fff;border-top:1px solid #dadada;border-bottom:1px solid #d0d0d0;box-shadow:0 1px 2px rgba(0,0,0,0.12)"></div>
<div class="vl" style="left:107px;top:266px;height:48px"></div>
<div class="vl" style="left:193px;top:266px;height:48px"></div>
<div class="vl" style="left:514px;top:266px;height:48px"></div>
<div class="vl" style="left:652px;top:266px;height:48px"></div>
<div class="vl" style="left:786px;top:266px;height:48px"></div>
<div class="vl" style="left:920px;top:266px;height:48px"></div>
<div class="vl" style="left:1040px;top:266px;height:48px"></div>
<div class="vl" style="left:1186px;top:266px;height:48px"></div>
<div class="vl" style="left:1332px;top:266px;height:48px"></div>
<div class="vl" style="left:1478px;top:266px;height:48px"></div>
<div class="vl" style="left:1624px;top:266px;height:48px"></div>
<div class="vl" style="left:1770px;top:266px;height:48px"></div>
<div class="cb" style="left:71px;top:279px"></div>
<div class="t b" style="left:118px;top:282px;color:#303030;letter-spacing:-0.45px">Off / On</div>
<div class="t b" style="left:204px;top:282px;color:#303030;letter-spacing:-0.45px">Campaign</div>
<div class="sarr" style="left:495px;top:289px;border-left-width:5px;border-right-width:5px;border-top-width:5px"></div>
<div class="t b" style="left:524px;top:282px;color:#303030;letter-spacing:-0.45px">Delivery</div>
<div class="t b" style="left:663px;top:282px;color:#303030;letter-spacing:-0.45px">Bid strategy</div>
<div class="t b" style="left:797px;top:282px;color:#303030;letter-spacing:-0.45px">Budget</div>
<div class="t b" style="left:939px;top:274px;color:#303030;letter-spacing:-0.45px">Attribution</div>
<div class="t b" style="left:931px;top:290px;color:#303030;letter-spacing:-0.45px">setting</div>
<svg class="abs" style="left:1050px;top:282px" width="13" height="13" viewBox="0 0 13 13"><circle cx="6.5" cy="6.5" r="6.5" fill="#1877f2"/><rect x="5.7" y="5.5" width="1.7" height="4.8" fill="#fff"/><circle cx="6.55" cy="3.5" r="1" fill="#fff"/></svg>
<div class="t b" style="left:1071px;top:282px;color:#303030;letter-spacing:-0.45px">Results</div>
<div class="sarr" style="left:1169px;top:289px;border-left-width:5px;border-right-width:5px;border-top-width:5px"></div>
<div class="t b" style="left:1197px;top:282px;color:#303030;letter-spacing:-0.45px">Reach</div>
<div class="sarr" style="left:1315px;top:289px;border-left-width:5px;border-right-width:5px;border-top-width:5px"></div>
<div class="t b" style="left:1343px;top:282px;color:#1877f2;letter-spacing:-0.45px">Impressions</div>
<svg class="abs" style="left:1423px;top:283px" width="12" height="14" viewBox="0 0 12 14" fill="none" stroke="#1877f2" stroke-width="1.6"><path d="M6 1.5 V13 M1.3 8.3 L6 13 L10.7 8.3"/></svg>
<div class="sarr" style="left:1461px;top:289px;border-left-width:5px;border-right-width:5px;border-top-width:5px"></div>
<div class="t b" style="left:1489px;top:282px;color:#303030;letter-spacing:-0.45px">Cost per result</div>
<div class="sarr" style="left:1607px;top:289px;border-left-width:5px;border-right-width:5px;border-top-width:5px"></div>
<div class="t b" style="left:1635px;top:282px;color:#303030;letter-spacing:-0.45px">Amount spent</div>
<div class="sarr" style="left:1752px;top:289px;border-left-width:5px;border-right-width:5px;border-top-width:5px"></div>
<div class="t b" style="left:1781px;top:282px;color:#303030;letter-spacing:-0.45px">Ends</div>
<div class="abs" style="left:59px;top:870px;width:1804px;height:63px;background:#fff;border-top:1px solid #d5d5d5;border-bottom:1px solid #dadada;box-shadow:0 -1px 3px rgba(0,0,0,0.10)"></div>
<div class="vl" style="left:193px;top:870px;height:63px"></div>
<div class="vl" style="left:514px;top:870px;height:63px"></div>
<div class="vl" style="left:920px;top:870px;height:63px"></div>
<div class="vl" style="left:1040px;top:870px;height:63px"></div>
<div class="vl" style="left:1186px;top:870px;height:63px"></div>
<div class="vl" style="left:1332px;top:870px;height:63px"></div>
<div class="vl" style="left:1478px;top:870px;height:63px"></div>
<div class="vl" style="left:1624px;top:870px;height:63px"></div>
<div class="vl" style="left:1770px;top:870px;height:63px"></div>
<div class="t b" style="left:206px;top:878px;color:#1c1e21;letter-spacing:-0.4px">Results from 22 campaigns</div>
<svg class="abs" style="left:382px;top:880px" width="13" height="13" viewBox="0 0 13 13"><circle cx="6.5" cy="6.5" r="6.5" fill="#1c1e21"/><rect x="5.7" y="5.5" width="1.7" height="4.8" fill="#fff"/><circle cx="6.55" cy="3.5" r="1" fill="#fff"/></svg>
<div class="t sub" style="left:206px;top:899px">Excludes deleted items</div>
<div class="t b" style="left:931px;top:878px;color:#1c1e21;letter-spacing:-0.45px">Multiple attrib…</div>
<div class="abs" style="left:1170px;top:885px;width:10px;height:2px;background:#1c1e21"></div>
<div class="t r sub" style="right:689px;top:899px">Multiple conversions</div>
<div class="t b r" style="right:543px;top:878px;color:#1c1e21;letter-spacing:0px">2,493,995</div>
<div class="t r sub" style="right:543px;top:899px">People</div>
<div class="t b r" style="right:397px;top:878px;color:#1c1e21;letter-spacing:0px">10,729,418</div>
<div class="t r sub" style="right:397px;top:899px">Total</div>
<div class="abs" style="left:1608px;top:885px;width:10px;height:2px;background:#1c1e21"></div>
<div class="t r sub" style="right:251px;top:899px">Multiple conversions</div>
<div class="t b r" style="right:105px;top:878px;color:#1c1e21;letter-spacing:0px">₱446,789.71</div>
<div class="t r sub" style="right:105px;top:899px">Total Spent</div>
<div class="abs" style="left:63px;top:937px;width:1409px;height:7px;border-radius:3.5px;background:#c2c2c2"></div>
</body></html>
